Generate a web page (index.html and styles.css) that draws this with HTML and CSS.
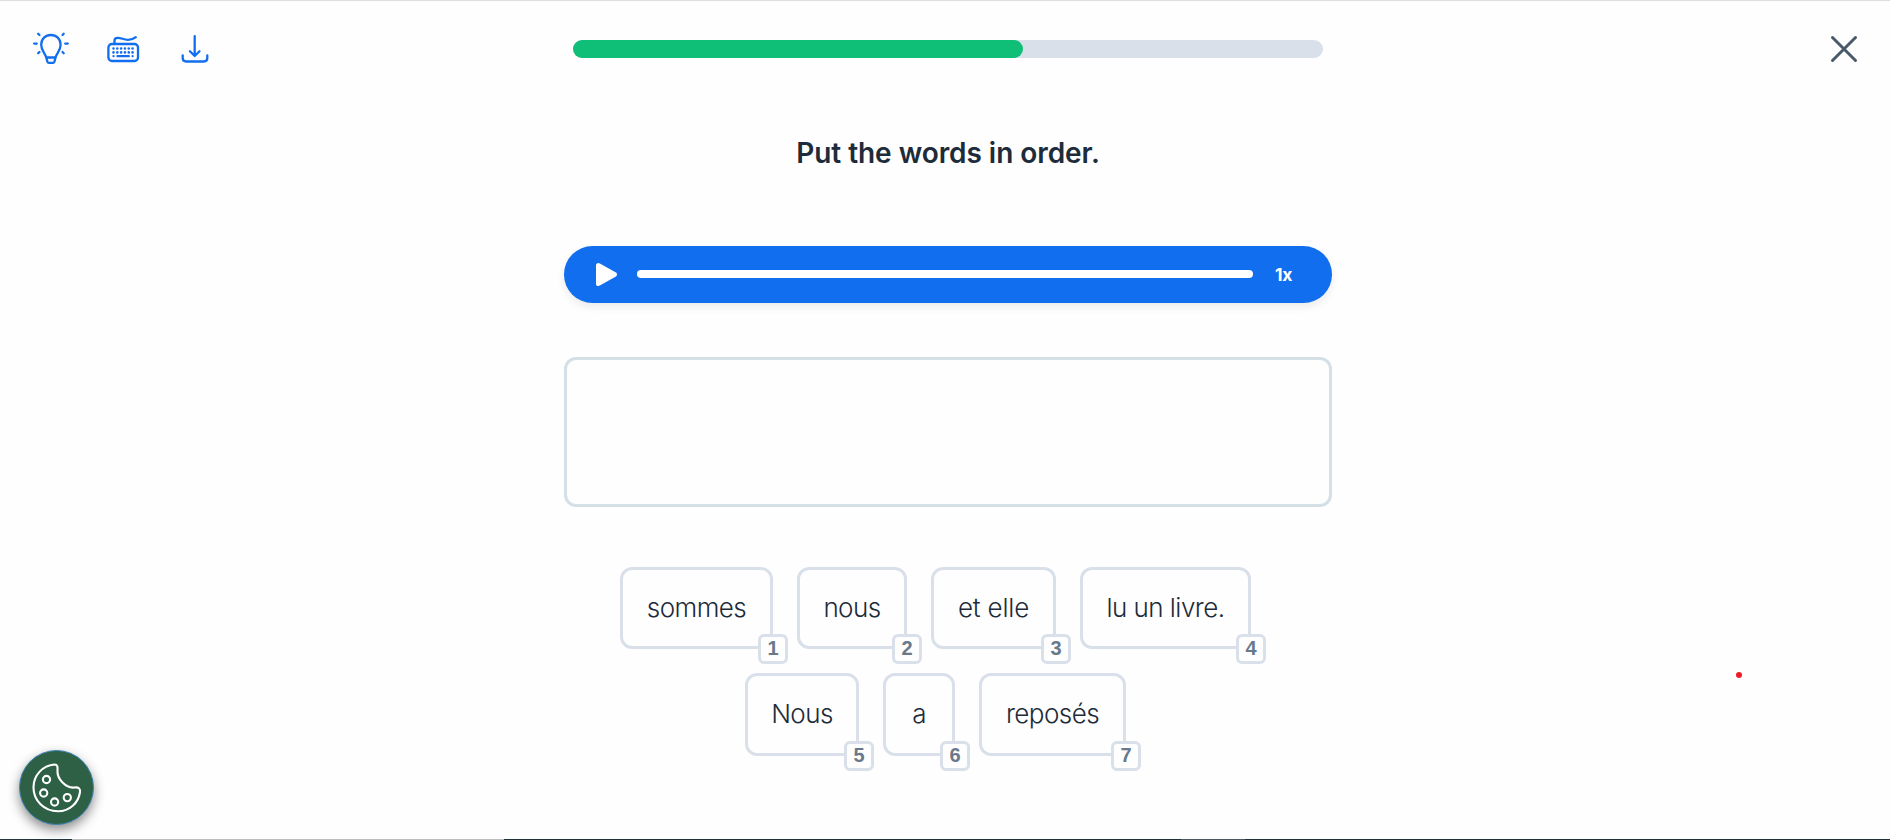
FILE: index.html
```
<!DOCTYPE html>
<html lang="en">
<head>
<meta charset="utf-8">
<title>Put the words in order</title>
<link rel="stylesheet" href="styles.css">
</head>
<body>
<div class="page">
  <header class="toolbar">
    <div class="tools">
      <svg class="icon" width="40" height="40" viewBox="0 0 40 40">
        <path d="M16.200 27.500C15.700 23.500 11.200 21.500 11.200 14.800C11.200 8.900 15.500 5 20.900 5S30.600 8.900 30.600 14.800C30.600 21.500 26.100 23.500 25.600 27.500ZM16.200 27.500L17.400 31.600Q17.800 32.800 18.900 32.800H22.900Q24 32.800 24.400 31.600L25.600 27.500M4.200 13.600H6.800M35.200 13.600H37.800M8.200 3.800L9.500 5M33.700 3.800L32.500 5M8.200 23.200L9.500 22M33.700 23.200L32.500 22"/>
      </svg>
      <svg class="icon" width="40" height="40" viewBox="0 0 40 40">
        <rect x="6.400" y="14" width="29.600" height="17" rx="3.500"/>
        <path d="M12.500 14V10.500Q12.500 7.800 15.500 7.800C20 7.800 21 9.800 26 9.800C30 9.800 32 8.700 33.800 7.200"/>
        <path class="keys" d="M11.500 18.500H32M11.500 22.400H32"/>
        <path d="M11.500 26.200h.01M15.500 26.200H26.800M30.600 26.200h.01"/>
      </svg>
      <svg class="icon" width="40" height="40" viewBox="0 0 40 40">
        <path d="M20.700 6.200V26M15.900 21.200L20.700 26L25.500 21.200M8.700 25.500V28Q8.700 31.500 12.200 31.500H29.800Q33.300 31.500 33.300 28V25.500"/>
      </svg>
    </div>
    <div class="progress"><div class="progress-fill" style="width:60%"></div></div>
    <svg class="close" width="28" height="28" viewBox="0 0 28 28"><path d="M2.500 2.500L25.500 25.500M25.500 2.500L2.500 25.500"/></svg>
  </header>

  <main class="exercise">
    <h1 class="title">Put the words in order.</h1>
    <div class="player">
      <svg class="play" width="21" height="23" viewBox="0 0 21 23"><path d="M0 2.600Q0 0 2.400 0Q3 0 3.800 .4L19.500 9.200Q21 10.100 21 11.500T19.500 13.800L3.800 22.600Q3 23 2.400 23Q0 23 0 20.400Z"/></svg>
      <div class="track"></div>
      <span class="speed">1x</span>
    </div>
    <div class="answer"></div>
    <div class="words">
      <div class="row">
        <div class="word w-sommes"><span>sommes</span><b class="key">1</b></div>
        <div class="word w-nous"><span>nous</span><b class="key">2</b></div>
        <div class="word w-elle"><span>et elle</span><b class="key">3</b></div>
        <div class="word w-livre"><span>lu un livre.</span><b class="key">4</b></div>
      </div>
      <div class="row row-second">
        <div class="word w-nous-cap"><span>Nous</span><b class="key">5</b></div>
        <div class="word w-a"><span>a</span><b class="key">6</b></div>
        <div class="word w-reposes"><span>reposés</span><b class="key">7</b></div>
      </div>
    </div>
  </main>

  <div class="bottom-line"></div>
  <div class="marker"></div>
  <div class="cookie">
    <svg width="52" height="52" viewBox="0 0 52 52">
      <path d="M23.500 2.500C26.500 2.500 26.800 5 26.500 8.500C25.800 17 35 26.500 43.500 25.500C47.500 25 49.500 26.500 49 30C47.500 41 38.500 49.300 27 49.300C13 49.300 2.500 38.500 2.500 25.500C2.500 13 12 3.300 23.500 2.500Z"/>
      <circle cx="15.500" cy="17.500" r="3.600"/><circle cx="12.700" cy="31" r="3.600"/><circle cx="23.600" cy="40" r="3.600"/><circle cx="36.300" cy="35.600" r="3.600"/>
    </svg>
  </div>
</div>
</body>
</html>
```
FILE: styles.css
```
* { box-sizing: border-box; }
body { margin: 0; background: #fefefe; color: #1d2b3a; font-family: Inter, "Liberation Sans", sans-serif; }
.page { position: relative; height: 840px; overflow: hidden; border-top: 1px solid #dfdfdf; display: flex; flex-direction: column; }

.toolbar { display: grid; grid-template-columns: 1fr 750px 1fr; align-items: center; height: 96px; padding: 0 32px 0 30px; }
.tools { display: flex; gap: 32px; padding-top: 2px; }
.icon { fill: none; stroke: #116eee; stroke-width: 2.3; stroke-linecap: round; stroke-linejoin: round; }
.keys { stroke-width: 2.6; stroke-dasharray: .01 3.800; }
.progress { height: 18px; border-radius: 9px; background: #dae0ea; margin-left: 4px; margin-right: -4px; }
.progress-fill { height: 100%; border-radius: 9px; background: #10bf77; }
.close { justify-self: end; fill: none; stroke: #4a586b; stroke-width: 3; stroke-linecap: round; }

.exercise { width: 768px; margin-left: 564px; display: flex; flex-direction: column; }
.title { margin: 34px 0 0; height: 44px; line-height: 44px; text-align: center; font-size: 28px; font-weight: 600; letter-spacing: -.05px; white-space: nowrap; }
.player { margin-top: 71px; height: 57px; border-radius: 28.5px; background: #116eee; display: flex; align-items: center; padding: 0 39px 0 32px; box-shadow: 0 4px 8px rgba(0,0,0,.08); color: #fff; }
.play { fill: #fff; }
.track { width: 616px; height: 8px; border-radius: 4px; background: #fff; margin: 0 22px 1px 20px; }
.speed { font-size: 17.5px; font-weight: 700; letter-spacing: -.2px; white-space: nowrap; }
.answer { margin-top: 54px; height: 150px; border: 3px solid #d5dfe6; border-radius: 12px; }

.words { margin-top: 60px; display: flex; flex-direction: column; gap: 24px; }
.row { display: flex; justify-content: center; gap: 24px; padding-right: 25px; }
.word { position: relative; height: 82px; padding-bottom: 2px; border: 3px solid #dae0ea; border-radius: 12px; display: flex; align-items: center; justify-content: center; font-size: 26px; font-weight: 300; letter-spacing: -.55px; white-space: nowrap; }
.row-second .word { height: 83px; padding-bottom: 3px; }
.w-sommes { width: 153px; }
.w-nous { width: 110px; }
.w-elle { width: 125px; letter-spacing: -.2px; }
.w-livre { width: 171px; }
.w-nous-cap { width: 114px; }
.w-a { width: 72px; }
.w-reposes { width: 147px; }
.key { position: absolute; right: -18px; bottom: -18px; width: 30px; height: 30px; border: 3px solid #dae0ea; border-radius: 6px; background: #fefefe; color: #69788b; font: 700 20px/22px "Liberation Sans", Arial, sans-serif; letter-spacing: 0; text-align: center; }

.cookie { position: absolute; left: 19px; top: 749px; width: 75px; height: 75px; border-radius: 50%; border: 1px solid #3f86b8; background: #2d6045; box-shadow: 0 5px 12px rgba(0,0,0,.45); display: flex; align-items: center; justify-content: center; }
.cookie svg { fill: none; stroke: #fff; stroke-width: 2.1; }
.marker { position: absolute; left: 1736px; top: 671px; width: 6px; height: 6px; border-radius: 50%; background: #ec1c24; }
.bottom-line { height: 1px; margin-top: auto; background: linear-gradient(90deg, #26353d 72px, #bdbdbd 72px 504px, #22303a 504px 1181px, #4c5860 1181px 1245px, #22303a 1245px); }
```
